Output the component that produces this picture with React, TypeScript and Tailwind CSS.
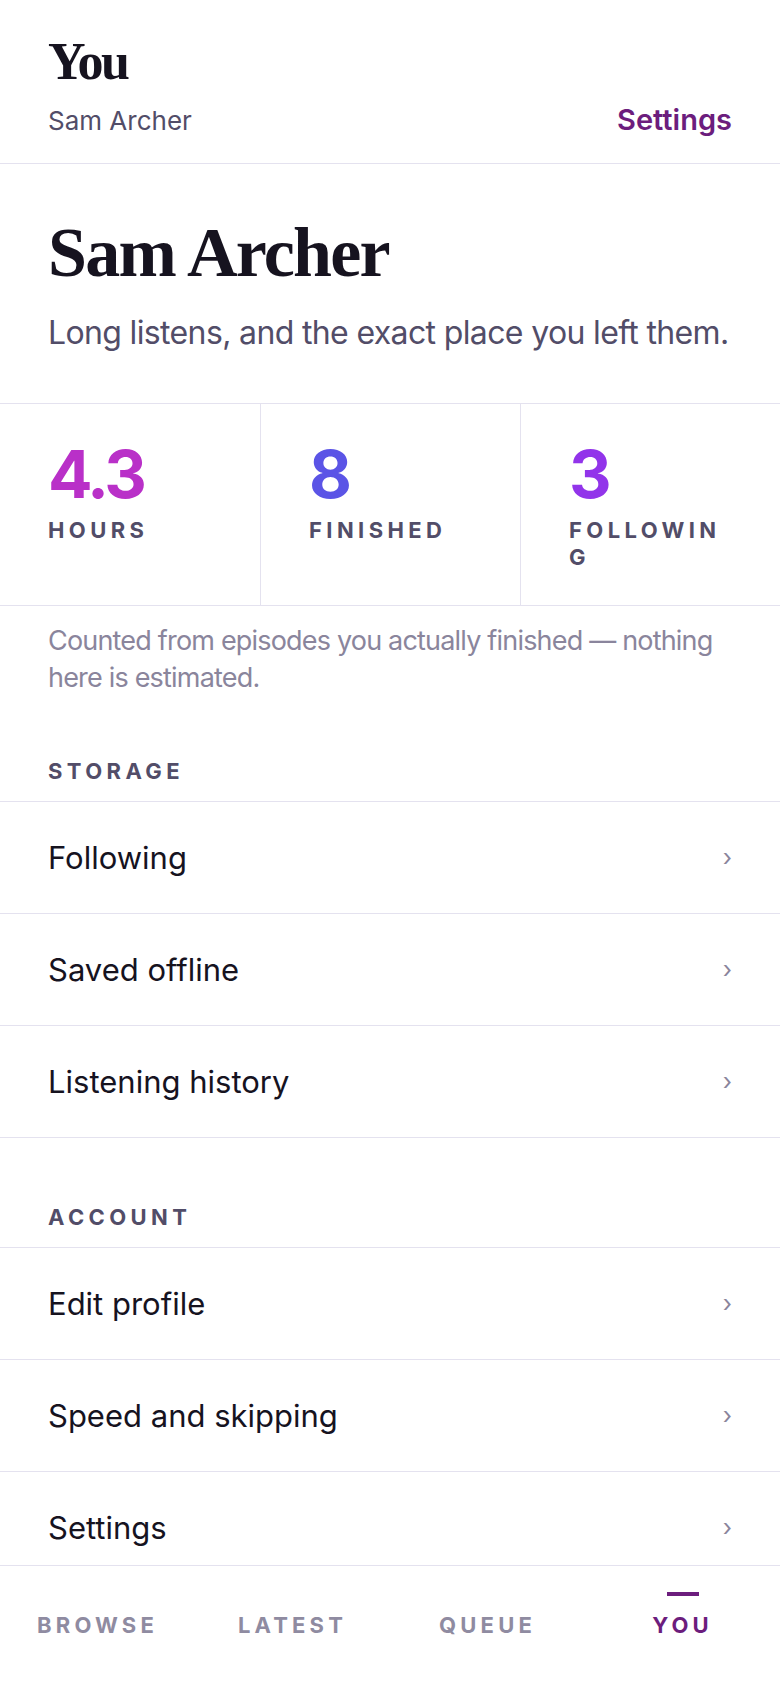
import React from 'react'

const sans = "font-['Inter','Noto_Sans',sans-serif]"
const serif = "font-['Liberation_Serif','DejaVu_Serif',serif]"

// stat blocks at the top of the profile
const stats = [
  { value: '4.3', label: 'HOURS', color: 'text-[#b930c8]' },
  { value: '8', label: 'FINISHED', color: 'text-[#5b54e6]' },
  { value: '3', label: 'FOLLOWING', color: 'text-[#9234ea]' },
]

const storageRows = ['Following', 'Saved offline', 'Listening history']
const accountRows = ['Edit profile', 'Speed and skipping', 'Settings']

const tabs = ['BROWSE', 'LATEST', 'QUEUE', 'YOU']

function Row({ title }: { title: string }) {
  return (
    <div className="flex h-[112px] items-center justify-between border-b border-[#e4e2ef] px-12">
      <span className="text-[31px] leading-[36px] text-[#16131f]">{title}</span>
      <span className="text-[24px] leading-none text-[#8a859c]">›</span>
    </div>
  )
}

function Section({ title, rows, top }: { title: string; rows: string[]; top: string }) {
  return (
    <section>
      <h3 className={`px-12 ${top} pb-[16px] text-[22px] font-bold leading-[27px] tracking-[0.2em] text-[#524d68]`}>
        {title}
      </h3>
      <div className="border-t border-[#e4e2ef]">
        {rows.map((r) => (
          <Row key={r} title={r} />
        ))}
      </div>
    </section>
  )
}

export default function App() {
  return (
    <div className={`${sans} flex h-screen flex-col bg-white`}>
      <main className="flex-1 overflow-hidden">
        {/* top bar */}
        <header className="border-b border-[#e4e2ef] px-12 pt-[34px] pb-[24px]">
          <h1 className={`${serif} text-[52px] font-bold leading-[56px] tracking-[-0.045em] text-[#16131f]`}>
            You
          </h1>
          <div className="mt-[12px] flex items-baseline justify-between">
            <span className="text-[26px] leading-[36px] text-[#524d68]">Sam Archer</span>
            <span className="text-[29px] font-semibold leading-[36px] text-[#6c1d7d]">Settings</span>
          </div>
        </header>

        {/* profile */}
        <div className="border-b border-[#e4e2ef] px-12 pt-[51px] pb-[48px]">
          <h2 className={`${serif} text-[70px] font-bold leading-[75px] tracking-[-0.025em] text-[#16131f]`}>
            Sam Archer
          </h2>
          <p className="mt-[21px] whitespace-nowrap text-[32px] leading-[44px] tracking-[-0.02em] text-[#524d68]">
            Long listens, and the exact place you left them.
          </p>
        </div>

        <div className="grid grid-cols-3 border-b border-[#e4e2ef]">
          {stats.map((s, i) => (
            <div
              key={s.label}
              className={`px-12 pt-[37px] pb-[34px] ${i > 0 ? 'border-l border-[#e4e2ef]' : ''}`}
            >
              <div className={`text-[66px] font-bold leading-[66px] tracking-[-0.05em] ${s.color}`}>
                {s.value}
              </div>
              <div className="mt-[10px] break-all text-[22px] font-bold leading-[27px] tracking-[0.2em] text-[#524d68]">
                {s.label}
              </div>
            </div>
          ))}
        </div>

        <p className="px-12 pt-[16px] text-[27px] leading-[37px] tracking-[-0.03em] text-[#8a859c]">
          Counted from episodes you actually finished — nothing here is estimated.
        </p>

        <Section title="STORAGE" rows={storageRows} top="pt-[62px]" />
        <Section title="ACCOUNT" rows={accountRows} top="pt-[66px]" />
      </main>

      <nav className="grid h-[123px] shrink-0 grid-cols-4 border-t border-[#e4e2ef] bg-white">
        {tabs.map((t) => {
          const active = t === 'YOU'
          return (
            <div key={t} className="flex flex-col items-center pt-[26px]">
              <div className={`h-1 w-8 ${active ? 'bg-[#6c1d7d]' : 'bg-transparent'}`} />
              <span
                className={`mt-[16px] text-[22px] font-bold leading-[27px] tracking-[0.19em] ${
                  active ? 'text-[#6c1d7d]' : 'text-[#8f8ba1]'
                }`}
              >
                {t}
              </span>
            </div>
          )
        })}
      </nav>
    </div>
  )
}
